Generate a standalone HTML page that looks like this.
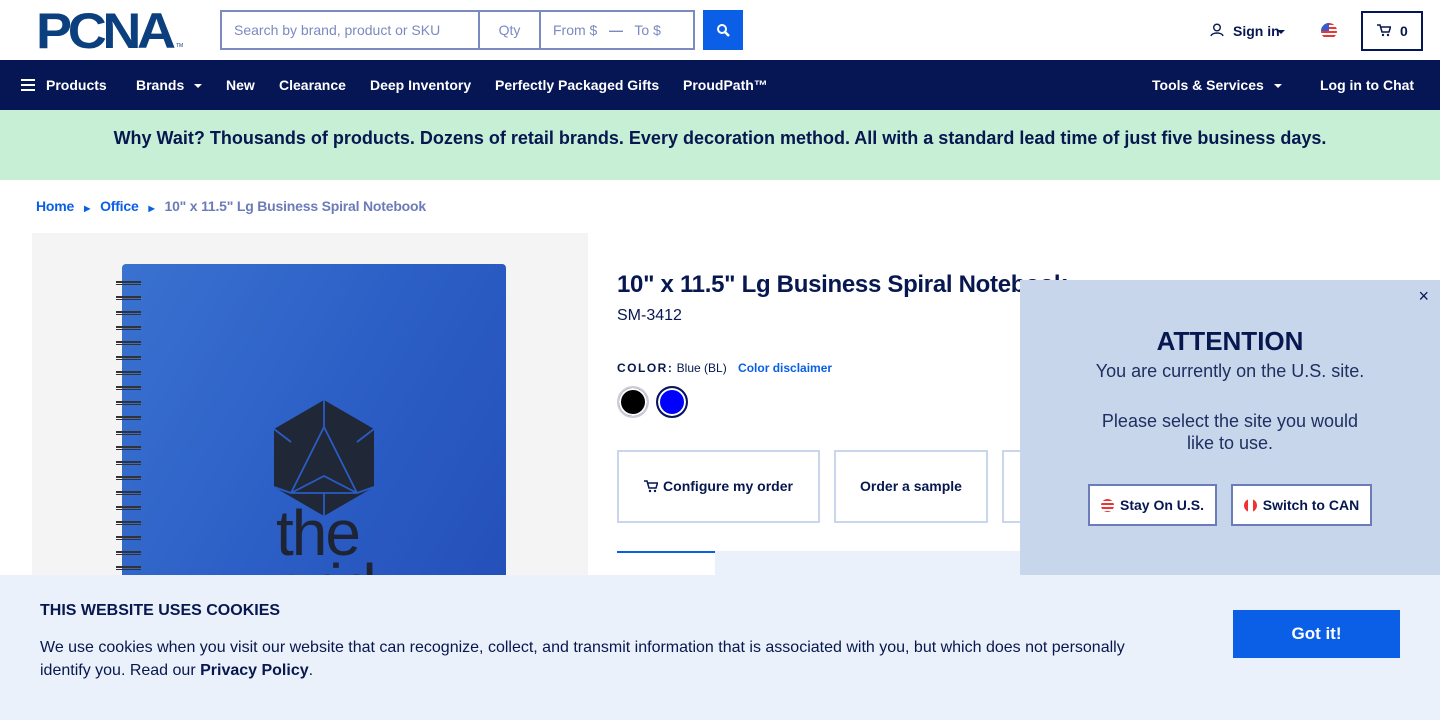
<!DOCTYPE html>
<html><head><meta charset="utf-8"><style>
*{box-sizing:border-box;margin:0;padding:0}
body{width:1440px;height:720px;overflow:hidden;position:relative;font-family:"Liberation Sans",sans-serif;color:#07174f;background:#fff}
.abs{position:absolute}
.nav{top:60px;left:0;width:1440px;height:50px;background:#061655;color:#fff;font-weight:bold;font-size:14px}
.nav span{position:absolute;top:17px}
.caret{display:inline-block;border-left:4px solid transparent;border-right:4px solid transparent;border-top:4px solid #fff;margin-left:10px;vertical-align:middle}
.inp{border:2px solid #7b8ac0;height:40px;top:10px;color:#7b8ac0;font-size:14px;line-height:36px}
.btn{border:2px solid #c9d6ec;background:#fff;font-weight:bold;font-size:14px;text-align:center;line-height:69px;height:73px;top:450px}
</style></head><body>
<div class="abs" style="left:36px;top:6px;font:bold 50px/50px 'Liberation Sans',sans-serif;color:#0b3f7e;letter-spacing:-4px;transform:scaleX(1.08);transform-origin:left">PCNA</div>
<div class="abs" style="left:176px;top:43px;font-size:5px;color:#0b3f7e">TM</div>
<div class="abs inp" style="left:220px;width:260px;padding-left:12px">Search by brand, product or SKU</div>
<div class="abs inp" style="left:478px;width:63px;text-align:center">Qty</div>
<div class="abs inp" style="left:539px;width:156px;padding-left:12px">From $ &nbsp; <b style="color:#7b8ac0">—</b> &nbsp; To $</div>
<div class="abs" style="left:703px;top:10px;width:40px;height:40px;background:#0a5fe6"><svg width="40" height="40"><circle cx="19" cy="19" r="4" fill="none" stroke="#fff" stroke-width="2"/><path d="M22 22l4 4" stroke="#fff" stroke-width="2.5"/></svg></div>
<svg class="abs" style="left:1210px;top:23px" width="14" height="14"><circle cx="7" cy="4.5" r="3.3" fill="none" stroke="#07174f" stroke-width="1.4"/><path d="M1 13c1-4 11-4 12 0" fill="none" stroke="#07174f" stroke-width="1.4"/></svg>
<div class="abs" style="left:1233px;top:23px;font-weight:bold;font-size:14px">Sign in</div>
<div class="abs" style="left:1277px;top:30px;border-left:4px solid transparent;border-right:4px solid transparent;border-top:4px solid #07174f"></div>
<div class="abs" style="left:1321px;top:23px;width:16px;height:16px;border-radius:50%;background:repeating-linear-gradient(#e33 0 2px,#fff 2px 4px);overflow:hidden"><div style="width:8px;height:8px;background:#3a5bc7"></div></div>
<div class="abs" style="left:1361px;top:11px;width:62px;height:40px;border:2px solid #061655;font-weight:bold;font-size:14px;line-height:36px;padding-left:37px">0</div>
<svg class="abs" style="left:1377px;top:24px" width="14" height="13"><path d="M0 1h3l2 7h7l1.5-5H4" fill="none" stroke="#07174f" stroke-width="1.5"/><circle cx="6" cy="11" r="1.2" fill="#07174f"/><circle cx="11" cy="11" r="1.2" fill="#07174f"/></svg>
<div class="abs nav">
<span style="left:21px"><span style="position:relative;display:inline-block;width:14px;height:12px;top:1px;border-top:2px solid #fff;border-bottom:2px solid #fff;margin-right:11px"><i style="position:absolute;top:3px;left:0;width:14px;height:2px;background:#fff"></i></span>Products</span>
<span style="left:136px">Brands<i class="caret"></i></span>
<span style="left:226px">New</span>
<span style="left:279px">Clearance</span>
<span style="left:370px">Deep Inventory</span>
<span style="left:495px">Perfectly Packaged Gifts</span>
<span style="left:683px">ProudPath™</span>
<span style="left:1152px">Tools &amp; Services<i class="caret"></i></span>
<span style="left:1320px">Log in to Chat</span>
</div>
<div class="abs" style="top:110px;left:0;width:1440px;height:70px;background:#c6efd6;text-align:center;font-weight:bold;font-size:18px;line-height:56px">Why Wait? Thousands of products. Dozens of retail brands. Every decoration method. All with a standard lead time of just five business days.</div>
<div class="abs" style="left:36px;top:198px;font-size:14px;font-weight:bold;color:#0a5fe6;letter-spacing:-0.2px">Home<span style="font-size:8px;margin:0 10px">▶</span>Office<span style="font-size:8px;margin:0 10px">▶</span><span style="color:#6b7cb8">10" x 11.5" Lg Business Spiral Notebook</span></div>
<div class="abs" style="left:32px;top:233px;width:556px;height:360px;background:#f4f4f4">
<div class="abs" style="left:90px;top:31px;width:384px;height:340px;border-radius:4px;background:linear-gradient(120deg,#3a72d0,#2a5cc4 60%,#2350b8)"></div>
<div class="abs" style="left:84px;top:45px;width:25px;height:300px;background:repeating-linear-gradient(#fff0 0 3px,#333 3px 5px,#fff0 5px 6px,#333 6px 7px,#fff0 7px 15px)"></div>
<svg class="abs" style="left:241px;top:167px" width="102" height="116"><polygon points="51,0 101,29 101,87 51,116 1,87 1,29" fill="#202838"/><path d="M51 27L18 93M51 27L84 93M18 93L51 76L84 93M18 93H84M1 29L18 42M101 29L84 42M51 0V27M51 93V116M18 93L1 87M84 93L101 87" stroke="#2a5cc4" stroke-width="1.8" fill="none"/></svg>
<div class="abs" style="left:244px;top:268px;font-size:64px;color:#1e2433;letter-spacing:-2px;line-height:64px">the</div>
<div class="abs" style="left:244px;top:322px;font-size:64px;color:#1e2433;letter-spacing:-2px;line-height:64px">grid</div>
</div>
<div class="abs" style="left:617px;top:271px;font-size:24px;font-weight:bold;letter-spacing:-0.3px">10" x 11.5" Lg Business Spiral Notebook</div>
<div class="abs" style="left:617px;top:307px;font-size:16px">SM-3412</div>
<div class="abs" style="left:617px;top:361px;font-size:12px"><b style="letter-spacing:1.5px">COLOR:</b> Blue (BL) <b style="color:#0a5fe6;margin-left:8px">Color disclaimer</b></div>
<div class="abs" style="left:617px;top:386px;width:32px;height:32px;border-radius:50%;border:2px solid #ccd;background:#000;box-shadow:inset 0 0 0 2px #fff"></div>
<div class="abs" style="left:656px;top:386px;width:32px;height:32px;border-radius:50%;border:2px solid #061655;background:#0000ff;box-shadow:inset 0 0 0 2px #fff"></div>
<div class="abs btn" style="left:617px;width:203px"><svg width="14" height="13" style="vertical-align:-2px;margin-right:5px"><path d="M0 1h3l2 7h7l1.5-5H4" fill="none" stroke="#07174f" stroke-width="1.5"/><circle cx="6" cy="11" r="1.2" fill="#07174f"/><circle cx="11" cy="11" r="1.2" fill="#07174f"/></svg>Configure my order</div>
<div class="abs btn" style="left:834px;width:154px">Order a sample</div>
<div class="abs btn" style="left:1002px;width:100px"></div>
<div class="abs" style="left:617px;top:551px;width:800px;height:30px;background:#ebf1fa"></div>
<div class="abs" style="left:617px;top:551px;width:98px;height:30px;background:#fff;border-top:2px solid #0a5fe6"></div>
<div class="abs" style="left:1020px;top:280px;width:420px;height:295px;background:#c8d6ec;text-align:center">
<div class="abs" style="right:11px;top:6px;font-size:18px">×</div>
<div style="margin-top:46px;font-size:26px;font-weight:bold">ATTENTION</div>
<div style="margin-top:4px;font-size:18px;color:#1e2f60">You are currently on the U.S. site.</div>
<div style="margin:28px auto 0;width:280px;font-size:18px;line-height:22px;color:#1e2f60">Please select the site you would like to use.</div>
<div class="abs" style="left:68px;top:204px;width:129px;height:42px;border:2px solid #6b7cb8;background:#fff;font-weight:bold;font-size:14px;line-height:38px"><span style="display:inline-block;width:13px;height:13px;border-radius:50%;background:repeating-linear-gradient(#e33 0 2px,#fff 2px 4px);vertical-align:-2px;margin-right:6px"></span>Stay On U.S.</div>
<div class="abs" style="left:211px;top:204px;width:141px;height:42px;border:2px solid #6b7cb8;background:#fff;font-weight:bold;font-size:14px;line-height:38px"><span style="display:inline-block;width:13px;height:13px;border-radius:50%;background:linear-gradient(90deg,#e33 0 4px,#fff 4px 9px,#e33 9px);vertical-align:-2px;margin-right:6px"></span>Switch to CAN</div>
</div>
<div class="abs" style="left:0;top:575px;width:1440px;height:145px;background:#ebf1fa">
<div class="abs" style="left:40px;top:27px;font-weight:bold;font-size:16px">THIS WEBSITE USES COOKIES</div>
<div class="abs" style="left:40px;top:61px;width:1110px;font-size:16px;line-height:23px">We use cookies when you visit our website that can recognize, collect, and transmit information that is associated with you, but which does not personally identify you. Read our <b>Privacy Policy</b>.</div>
<div class="abs" style="left:1233px;top:35px;width:167px;height:48px;background:#0a5fe6;color:#fff;font-weight:bold;font-size:17px;text-align:center;line-height:48px">Got it!</div>
</div>
</body></html>
